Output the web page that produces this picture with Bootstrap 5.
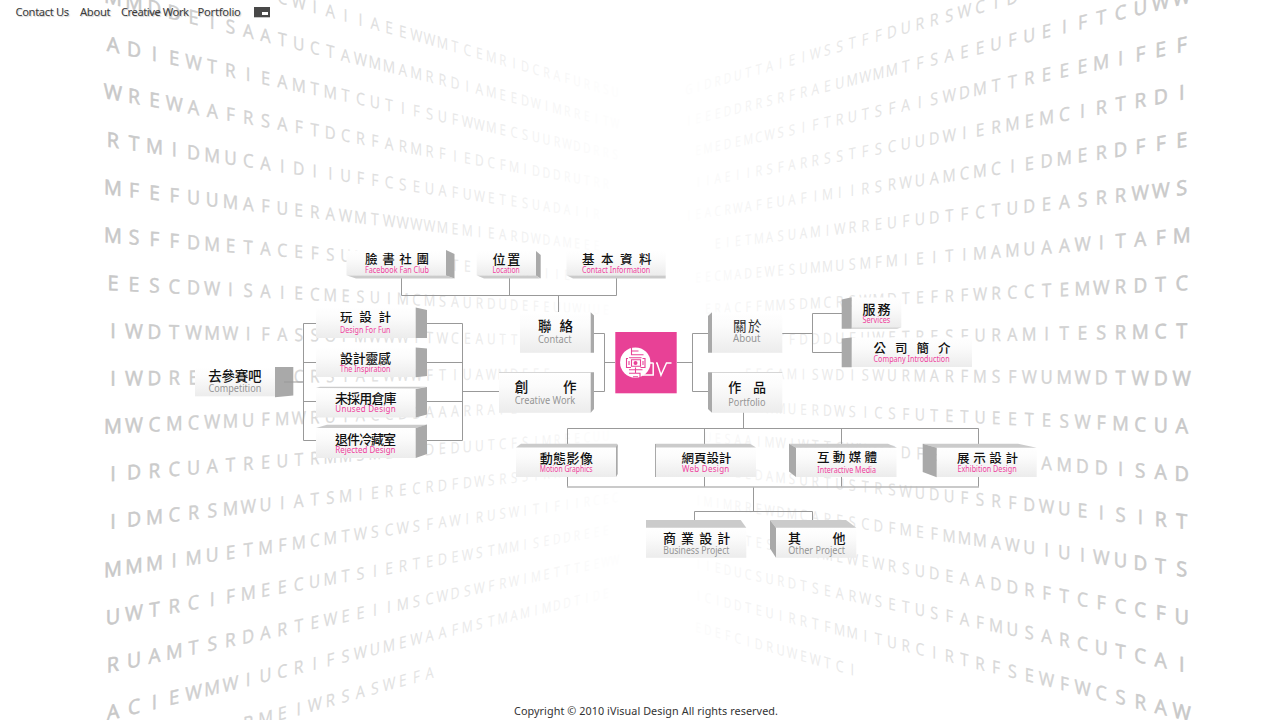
<!DOCTYPE html>
<html lang="zh-Hant">
<head>
<meta charset="utf-8">
<meta name="viewport" content="width=device-width, initial-scale=1">
<title>iVisual Design</title>
<link href="https://cdn.jsdelivr.net/npm/bootstrap@5.3.0/dist/css/bootstrap.min.css" rel="stylesheet">
<style>
  body { font-family: "Open Sans", "Noto Sans CJK TC", sans-serif; background: #fff; color: #333; }
  .stage { height: 720px; width: 1280px; }
  .stage svg.layer { left: 0; top: 0; }
  .top-links { padding: 3px 0 0 15.5px; font-family: "Noto Sans", sans-serif; font-size: 11.2px; line-height: 17px; }
  .top-links a { color: #3a3a3a; text-shadow: 1px 1px 1px rgba(0,0,0,.2); padding: 0; white-space: nowrap; }
  .w-contact { width: 64.5px; letter-spacing: -.37px; }
  .w-about { width: 41px; letter-spacing: -.3px; }
  .w-creative { width: 76.5px; letter-spacing: -.45px; }
  .w-portfolio { width: 56.5px; letter-spacing: -.25px; }
  .screen-toggle { margin-top: 4px; }
  .copyright { font-family: "Noto Sans", sans-serif; font-size: 10.8px; line-height: 16px; padding-bottom: 1px; padding-left: 12px; letter-spacing: .07px; }
  .wall { font-family: "Open Sans", sans-serif; fill: #c6c6c6; stroke: #c6c6c6; }
  .zh { font-family: "Noto Sans CJK TC", sans-serif; font-weight: 500; fill: #111; }
  .zh-thin { font-weight: 400; fill: #333; }
  .en { font-family: "Noto Sans", sans-serif; }
  .en-main { fill: #959595; font-size: 10.2px; }
  .en-sub { fill: #ef3f9d; font-size: 8px; }
  .wire { fill: none; stroke: #999; stroke-width: 1; }
  .side { fill: #a9a9a9; }
  .lid { fill: #cbcbcb; }
</style>
</head>
<body>
<div class="stage position-relative overflow-hidden d-flex flex-column justify-content-between">
  <svg class="layer position-absolute wall" id="walls" width="1280" height="720" aria-hidden="true"></svg>

  <nav class="nav top-links position-relative">
    <a class="nav-link w-contact" href="#">Contact Us</a>
    <a class="nav-link w-about" href="#">About</a>
    <a class="nav-link w-creative" href="#">Creative Work</a>
    <a class="nav-link w-portfolio" href="#">Portfolio</a>
    <svg class="screen-toggle" width="17" height="11"><rect x="0" width="16" height="10.3" fill="#484848"/><rect x="8" y="5" width="6" height="3" fill="#fff"/></svg>
  </nav>

  <svg class="layer position-absolute" width="1280" height="720">
    <defs>
      <linearGradient id="face" x1="0" y1="0" x2="0" y2="1">
        <stop offset="0" stop-color="#fff"/><stop offset=".35" stop-color="#fbfbfb"/><stop offset="1" stop-color="#ececec"/>
      </linearGradient>
    </defs>
    <g class="wire">
      <path d="M401.5 278V295.5H616.5V278M509.5 278V295.5M558.5 295.5V312"/>
      <path d="M316 323.5H303.5V440.5H316M303.5 362.5H316M303.5 401.5H316"/>
      <path d="M427 323.5H462.5V440.5H427M427 362.5H462.5M427 401.5H462.5M462.5 391.5H500"/>
      <path d="M594 333.5H604.5V391.5H594M604.5 362.5H615M677 362.5H692.5M708 333.5H692.5V391.5H708"/>
      <path d="M782 333.5H812.5M842 313.5H812.5V352.5H842"/>
      <path d="M743.5 412V428.5M567.5 444V428.5H978.5V444M704.5 428.5V444M841.5 428.5V444"/>
      <path d="M567.5 477V487M704.5 477V487M841.5 477V487M978.5 477V487M753.5 487V511.5M694.5 520V511.5H812.5V520"/>
      <path d="M567 487H979" stroke="#b9b9b9" stroke-width="1.4"/>
    </g>
    <g id="nodes"></g>
    <path class="wire" d="M284 382H304"/>
    <g id="logo">
      <rect x="615.3" y="332" width="61.4" height="61.3" fill="#e84196"/>
      <circle cx="635.3" cy="362.6" r="15.2" fill="#fff"/>
      <g fill="none" stroke="#e84196" stroke-width="1.1">
        <path d="M631.500 347V351H638.500M631.500 351V354.800H643.500M629.500 358V357.800H641.500"/>
        <path d="M628 358.500H626.500V367.500H631M642.500 358.500H645V367.500H640.500M631.500 359.800H640.500V366.200H631.500ZM629 361V365M643 361V365"/>
        <path d="M629 369.800H642.500M635.500 367.500V373M629 373.200H640V377.500M633 376.800H638"/>
      </g>
      <circle cx="635.500" cy="362.900" r="2" fill="#e84196"/>
      <path d="M643 375H653.200V363M649 362.900H653.500M656 363H657L661 375.200L666.500 363H671.500" fill="none" stroke="#fff" stroke-width="1.500"/>
    </g>
  </svg>

  <footer class="copyright position-relative text-center">Copyright © 2010 iVisual Design All rights reserved.</footer>
</div>

<script src="https://cdn.jsdelivr.net/npm/bootstrap@5.3.0/dist/js/bootstrap.bundle.min.js"></script>
<script>
// Letters on the two receding walls, one string for each row, top to bottom.
const pad = n => ' '.repeat(n);
const left = [
  pad(9) + 'CWIAIIAEEWWMTCEMRIDCRAFURRSU', 'MMDDEISAATUCTAWMMAMRRDIAMEEDWIMRREITW',
  'ADIEWTRIEAMTMTCUTIFSUFWWMECSUURWDDRRS', 'WREWAAFRSAFTDCRFARMRFIEDCFMIDDDRUTRR',
  'RTMIDMUCAIDIIUFFCSEUAFUWETESUADAIIR', 'MFEFUUMAFUERAWMTWWWWMEMIEARDWDAMEEE',
  'MSFFDMETACEFSUMEIRSIWTEIUMSRAIIE', 'EESCDWISAIECMESUIMCMSAURDUDEFEUUWUUE',
  'IWDTWMWIFASSOFMWWWITWCEAUTTSCEED', 'IWDREMASTECRSIAEWWWFTIUAWMDEEF',
  'MWCMCWMUFMWRUTACCDSAAARRAFE', 'IDRCUATREUTRMMSMEWMDEDUUTCFSIMREECUU',
  'IDMCRSMWUIATSMIERECRDFDWSRSSIRR', 'MMMIMUETMFMCMTWSCWSFAWIRUSWITIFIIRCEC',
  'UWTRCIFMEECUMTSIERTEDEWSTMMISEDDREEE', 'RUAMTSRDARTEWEEIIMSCWDSWFRWIMETTTEEWW',
  'ACIEWMWIUCRIFSWUMEWAAFMSTMAMIMDDTIDE', pad(7) + 'RMEIWRSASWEFA'
];
const right = [
  'GIDRDUTTAIEIWSSTFFDURRSWCID' + pad(9), 'IEEEDDRRSRFRAEUMWMMTFSAEEUFUEIFTCUWW',
  'EMEDEMCWSSIFTRUTSFAISWDMTTREEEMIFEF', 'IIAEIIRSFARRSSTFSCUUDWIERMEMCIRTRDI',
  'IEACRWAFEUAFIMIIRSRWUAMCMCIEDMERDFFE', 'EIETMASUAMIWRREUFUDTFCTUDEASRRWWS',
  'EECMADEWESUMMUSMFMIEITIMAMUAAWITAFM', 'ERACFFMMSDMCRSWMDTEFRFWRCCTEMWRDTC',
  'SERWTFDDDUFUWETRESFURAMITESRMCT', 'EECAMISWDISWURMARFMSFWUMWDTWDW',
  'AWMUERDWSICSFUTETUEETESWFMCUA', 'UESAAIMWIWTTCWWMSDFEMIRTWEAMDDISAD',
  'EEDAMSURTUSTRSWUDUFSRFDWUEISIRT', 'IMIMRREWDMCARESCDFMEFMMMAWUIUIWUDTS',
  'IRTESSDWRMEWEWRSUDEAADDRFTCFCCFU', 'IIEDUCSURDTSEARWSETUSFAFMUSARCUTCAI',
  'ICIDDTEUIRRTFMMITURCIRTRFSEWFWCSRAW', 'EDEFCIDRUWEWTCI' + pad(20)
];
const C = 0.01463, B = 21.29, HORIZON = 362, rows = [];
function wall(lines, mirror) {
  lines.forEach((line, r) => {
    const y0 = -50.3 + 47.65 * r, chars = mirror ? [...line].reverse() : [...line];
    chars.forEach((ch, k) => {
      if (ch === ' ') return;
      const s = 1 / (1 + C * k), sx = Math.pow(s, 1.75) * .97;
      const xl = 113 + B * k * s, x = mirror ? 1294.7 - xl : xl;
      const slope = -(y0 - HORIZON) * C / B * (mirror ? -1 : 1);
      const y = HORIZON + (y0 - HORIZON) * s + 7.2 * s;
      const o = Math.max(0.03, 0.95 - k / 37.5);
      const bold = Math.max(.1, .6 - k * .03);
      rows.push(`<text font-size="20.5" stroke-width="${bold.toFixed(2)}" text-anchor="middle" opacity="${o.toFixed(2)}" transform="matrix(${sx.toFixed(3)} ${(sx * slope).toFixed(4)} 0 ${s.toFixed(3)} ${x.toFixed(1)} ${y.toFixed(1)})">${ch}</text>`);
    });
  });
}
wall(left, false);
wall(right, true);
document.getElementById('walls').innerHTML = rows.join('');

// Boxes: face [x, y, right, bottom], shaded side and lid polygons, and the two labels.
const nodes = [
  { f: [346.5, 250.5, 446, 275.5], side: '446,250 454.500,254 454.500,278.500 446,275.500', lid: '347,275.500 356,278.500 454,278.500 446,275.500', zh: '臉書社團', zs: 12.5, zx: [365, 429], zy: 259.5, en: 'Facebook Fan Club', ex: [365, 429], ey: 272.7, sub: 1 },
  { f: [476.7, 250.5, 536, 275.5], side: '536,251 540.700,255 540.700,278.500 536,275.500', lid: '477,275.500 484,278.500 540,278.500 536,275.500', zh: '位置', zs: 13, zx: [492.5, 520.3], zy: 259.3, en: 'Location', ex: [492.5, 519.8], ey: 272.7, sub: 1 },
  { f: [566.5, 250.5, 665.7, 275.5], lid: '567,275.500 573,278.500 665.700,278.500 665.700,275.500', zh: '基本資料', zs: 12.5, zx: [582, 651.5], zy: 259.3, en: 'Contact Information', ex: [582, 650.3], ey: 273, sub: 1 },
  { f: [316, 307.3, 415.7, 338], side: '415.700,307.500 427,310 427,338 415.700,338', zh: '玩設計', zs: 12.5, zx: [340, 391], zy: 317.3, en: 'Design For Fun', ex: [340, 390.5], ey: 333, sub: 1 },
  { f: [316, 347.5, 415.7, 377], side: '415.700,347.500 427,348.500 427,376 415.700,377.300', zh: '設計靈感', zs: 13, zx: [340, 391], zy: 358.3, en: 'The Inspiration', ex: [340, 390.5], ey: 371.8, sub: 1 },
  { f: [316, 388, 415.7, 417.5], side: '415.700,389 427,387 427,414.500 415.700,417.500', lid: '316,388 320,386.800 427,386.800 415.700,388.500', zh: '未採用倉庫', zs: 13, zx: [335, 396.5], zy: 398.3, en: 'Unused Design', ex: [335.3, 395.7], ey: 411.9, sub: 1, spaced: 1 },
  { f: [316, 427.7, 415.7, 458], side: '415.700,428 427,424.500 427,454 415.700,458', lid: '316,427.900 327,424.700 427,424.700 415.700,427.900', zh: '退件冷藏室', zs: 13, zx: [335, 396], zy: 439.3, en: 'Rejected Design', ex: [335.3, 395.5], ey: 453, sub: 1, spaced: 1 },
  { f: [195, 367, 275, 396.3], side: '275,367 293.300,367 293.300,395.500 275,397.300', zh: '去參賽吧', zs: 13.5, zx: [208.3, 261.5], zy: 375.8, en: 'Competition', ex: [208.5, 261.3], ey: 391.6 },
  { f: [520, 312.3, 590.7, 352.8], side: '590.700,312.300 594,315.500 594,352.800 590.700,352.800', zh: '聯絡', zs: 13.5, zx: [538, 573], zy: 326.5, en: 'Contact', ex: [538, 571.5], ey: 342.8 },
  { f: [499, 372.3, 590.7, 412.8], edge: 1, side: '590.700,372.300 594,372.300 594,409 590.700,412.800', zh: '創作', zs: 13.5, zx: [514.8, 576.5], zy: 387.5, en: 'Creative Work', ex: [514.8, 575.3], ey: 403.7 },
  { f: [712, 312.3, 782.3, 352.8], side: '712,312.300 708,316 708,352.800 712,352.800', zh: '關於', zs: 13.5, thin: 1, zx: [733, 761.5], zy: 326.3, en: 'About', ex: [733, 760.5], ey: 342 },
  { f: [712, 372.3, 782.3, 412.8], edge: 1, side: '712,372.300 708,372.300 708,409 712,412.800', zh: '作品', zs: 13, zx: [728.3, 766], zy: 386.8, en: 'Portfolio', ex: [728.3, 765.5], ey: 405.6 },
  { f: [851.7, 297.5, 901.3, 327.5], side: '841.700,299.500 851.700,297.300 851.700,328.700 841.700,328.700', lid: '851.700,327.500 901.300,327.500 897,328.700 851.700,328.700', zh: '服務', zs: 13, zx: [862.5, 890.5], zy: 309.6, en: 'Services', ex: [862.5, 890.3], ey: 322.5, sub: 1 },
  { f: [851.7, 337.5, 972, 367], side: '841.700,338.500 851.700,337.500 851.700,367.300 841.700,367.300', zh: '公司簡介', zs: 12.5, zx: [873.5, 950.5], zy: 348.5, en: 'Company Introduction', ex: [873.6, 949.6], ey: 361.5, sub: 1 },
  { f: [516, 447.3, 616, 477], side: '616,447 617.700,444 617.700,474 616,477', lid: '516,447.500 521,443.700 617,443.700 617.700,447.500', zh: '動態影像', zs: 13, zx: [539.7, 593], zy: 458.4, en: 'Motion Graphics', ex: [539.8, 592.5], ey: 472.1, sub: 1 },
  { f: [655.5, 447.3, 756, 477], side: '655,444 656,444 656,477 655,477', lid: '655.300,443.700 750,443.700 756,447.500 655.300,447.500', zh: '網頁設計', zs: 12.5, zx: [681.5, 731.3], zy: 458.4, en: 'Web Design', ex: [682, 729.3], ey: 472.1, sub: 1, spaced: 1 },
  { f: [796, 447.5, 896.5, 477], side: '789,443.700 796,447.700 796,477 789,471.500', lid: '789,443.700 888,443.700 897,447.700 796,447.700', zh: '互動媒體', zs: 12.5, zx: [817, 877], zy: 457.3, en: 'Interactive Media', ex: [817.3, 876], ey: 473.3, sub: 1 },
  { f: [936.7, 447.5, 1036.7, 477], side: '922.700,443.700 936.700,447.700 936.700,477.300 922.700,472', lid: '922.700,443.700 1018,443.700 1036.700,447.700 936.700,447.700', zh: '展示設計', zs: 12.5, zx: [957, 1018], zy: 458.6, en: 'Exhibition Design', ex: [957.5, 1016.6], ey: 472.1, sub: 1 },
  { f: [646, 527.7, 746.3, 557.8], lid: '646,520 740.700,520 746.300,527.800 646,527.800', zh: '商業設計', zs: 13, zx: [663, 730.3], zy: 538.3, en: 'Business Project', ex: [663.3, 729.5], ey: 554.1 },
  { f: [776, 527.7, 856.3, 557.8], side: '770,520 776,527.700 776,557.700 770,548.500', lid: '770,520 846,520 856.300,527.800 776,527.800', zh: '其他', zs: 13, zx: [788, 845.5], zy: 538.3, en: 'Other Project', ex: [788.3, 845], ey: 554.1 }
];
document.getElementById('nodes').innerHTML = nodes.map(n => {
  const [x, y, r, b] = n.f, gap = (n.zx[1] - n.zx[0] - n.zs) / (n.zh.length - 1);
  const xs = [...n.zh].map((_, i) => (n.zx[0] + i * gap).toFixed(1)).join(' ');
  return `<rect x="${x}" y="${y}" width="${r - x}" height="${b - y}" fill="url(#face)"/>`
    + (n.edge ? `<path d="M${x} ${y + .2}H${r}" stroke="#ccc" stroke-width=".8"/>` : '')
    + (n.lid ? `<polygon class="lid" points="${n.lid}"/>` : '')
    + (n.side ? `<polygon class="side" points="${n.side}"/>` : '')
    + `<text class="zh ${n.thin ? 'zh-thin' : ''}" font-size="${n.zs}" x="${xs}" y="${n.zy + n.zs * .37}">${n.zh}</text>`
    + `<text class="en ${n.sub ? 'en-sub' : 'en-main'}" x="${n.ex[0]}" y="${n.ey}" textLength="${n.ex[1] - n.ex[0]}" lengthAdjust="${n.spaced ? 'spacing' : 'spacingAndGlyphs'}">${n.en}</text>`;
}).join('');
</script>
</body>
</html>
